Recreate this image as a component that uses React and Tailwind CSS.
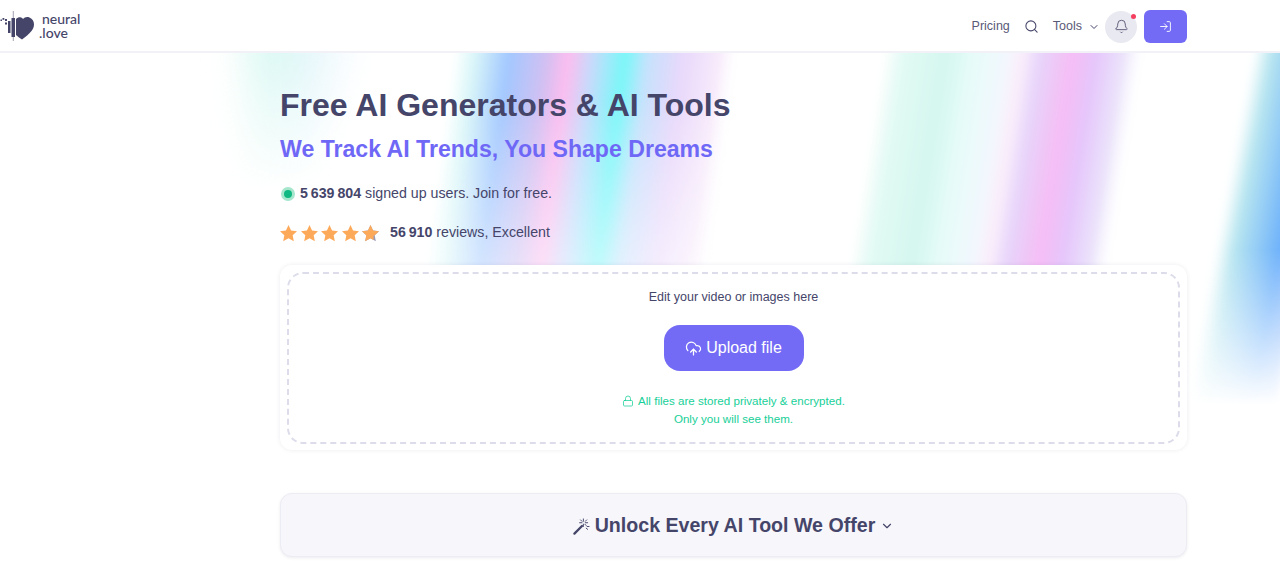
import React from "react";
import { Search, ChevronDown, Bell, LogIn, CloudUpload, Lock } from "lucide-react";

const STAR = "M12 1l3.300 7 7.700 1-5.600 5.300 1.500 7.700L12 18.200 5.100 22l1.500-7.700L1 9l7.700-1z";

function Star({ half }) {
  return (
    <svg width="17" height="17" viewBox="1 1 22 22" className="shrink-0">
      {half ? (
        <>
          <path d={STAR} fill="#9a9ab5" />
          <path d="M12 1l3.300 7 7.700 1-5.600 5.300L16 15v5.500l-4-2.300L5.100 22l1.500-7.700L1 9l7.700-1z" fill="#fda95a" />
        </>
      ) : (
        <path d={STAR} fill="#fda95a" />
      )}
    </svg>
  );
}

function Logo() {
  return (
    <svg width="36" height="36" viewBox="0 0 36 36" className="shrink-0">
      <g fill="#45456a">
        <path d="M16 10c1.500-1.500 3.500-2 5-1.500 1 .3 1.500.8 2 1.500 1.500-1.800 4-2.500 6.500-1.500 3 1.200 4.500 4 4.500 7 0 2.500-1 4.500-2.500 6.500-2.500 3.200-6 6-9.500 8.500-2-1.300-4-2.800-6-4.500z" />
        <rect x="11.500" y="9" width="3.500" height="19" />
        <rect x="8" y="12" width="2.500" height="12" />
        <rect x="5" y="10" width="2" height="2" />
        <rect x="5" y="13.500" width="2" height="2" />
        <rect x="2.500" y="9" width="1.800" height="1.800" />
        <rect x="0.500" y="10.500" width="1.500" height="1.500" />
      </g>
      <rect x="12.800" y="2" width="1" height="30" fill="#45456a" opacity=".5" />
    </svg>
  );
}

function Wand() {
  return (
    <svg width="17" height="17" viewBox="0 0 18 18" fill="none" stroke="#45456a" className="shrink-0">
      <path d="M1.500 16.500l8-8" strokeWidth="2.400" strokeLinecap="round" />
      <path d="M11 1v2.500M11 6.500V9M7 5h2.500M13 5h2.500M8 2l1.500 1.500M14.500 2L13 3.500M14 8l-1.500-1.500M17 9h-2M15.500 12l-1.500-1.200" strokeWidth="1" strokeLinecap="round" />
    </svg>
  );
}

function Aurora() {
  return (
    <svg width="1280" height="576" viewBox="0 0 1280 576" className="absolute top-0 left-0 pointer-events-none">
      <defs>
        <filter id="b4" x="-20%" y="-20%" width="140%" height="140%"><feGaussianBlur stdDeviation="4" /></filter>
        <filter id="b10" x="-30%" y="-30%" width="160%" height="160%"><feGaussianBlur stdDeviation="14" /></filter>
        <linearGradient id="hz" x1="0" x2="1" y1="0" y2="0">
          <stop offset="0" stopColor="#d6f8f1" stopOpacity="0" />
          <stop offset=".3" stopColor="#d6f8f1" />
          <stop offset=".6" stopColor="#e4f6fb" />
          <stop offset="1" stopColor="#f4f8ff" stopOpacity="0" />
        </linearGradient>
        <linearGradient id="cn" x1="0" x2="1" y1="0" y2="0">
          <stop offset="0" stopColor="#d8f7f7" stopOpacity="0" />
          <stop offset=".07" stopColor="#daf6f8" />
          <stop offset=".19" stopColor="#a2c8ff" />
          <stop offset=".32" stopColor="#d0c0f2" />
          <stop offset=".4" stopColor="#fdbdef" />
          <stop offset=".49" stopColor="#c4dcfc" />
          <stop offset=".6" stopColor="#78f8f8" />
          <stop offset=".68" stopColor="#c6e2fd" />
          <stop offset=".8" stopColor="#e8d8fb" />
          <stop offset=".93" stopColor="#f7eafb" />
          <stop offset="1" stopColor="#ffffff" stopOpacity="0" />
        </linearGradient>
        <linearGradient id="r1" x1="0" x2="1" y1="0" y2="0">
          <stop offset="0" stopColor="#dff9f2" stopOpacity="0" />
          <stop offset=".08" stopColor="#e2faf4" />
          <stop offset=".24" stopColor="#d4f7ef" />
          <stop offset=".34" stopColor="#e6fbf8" />
          <stop offset=".46" stopColor="#f1f8fe" />
          <stop offset=".53" stopColor="#fbeefb" />
          <stop offset=".6" stopColor="#e6d4fa" />
          <stop offset=".72" stopColor="#f6bdf5" />
          <stop offset=".81" stopColor="#e5c6fb" />
          <stop offset=".92" stopColor="#ebe4fb" />
          <stop offset="1" stopColor="#ffffff" stopOpacity="0" />
        </linearGradient>
        <linearGradient id="r2" x1="0" x2="1" y1="0" y2="0">
          <stop offset="0" stopColor="#bfeaf0" stopOpacity="0" />
          <stop offset=".2" stopColor="#b8e6f0" />
          <stop offset=".72" stopColor="#6cb0fb" />
          <stop offset="1" stopColor="#90bafc" />
        </linearGradient>
        <linearGradient id="fadeCn" gradientUnits="userSpaceOnUse" x1="0" x2="0" y1="100" y2="420">
          <stop offset="0" stopColor="#fff" />
          <stop offset="1" stopColor="#000" />
        </linearGradient>
        <linearGradient id="fadeHz" gradientUnits="userSpaceOnUse" x1="0" x2="0" y1="40" y2="190">
          <stop offset="0" stopColor="#fff" />
          <stop offset="1" stopColor="#000" />
        </linearGradient>
        <linearGradient id="fadeR2" gradientUnits="userSpaceOnUse" x1="0" x2="0" y1="250" y2="405">
          <stop offset="0" stopColor="#fff" />
          <stop offset="1" stopColor="#000" />
        </linearGradient>
        <mask id="mCn" maskUnits="userSpaceOnUse" x="0" y="0" width="1280" height="576"><rect width="1280" height="576" fill="url(#fadeCn)" /></mask>
        <mask id="mHz" maskUnits="userSpaceOnUse" x="0" y="0" width="1280" height="576"><rect width="1280" height="576" fill="url(#fadeHz)" /></mask>
        <mask id="mR2" maskUnits="userSpaceOnUse" x="0" y="0" width="1280" height="576"><rect width="1280" height="576" fill="url(#fadeR2)" /></mask>
      </defs>
      <g mask="url(#mHz)">
        <polygon points="225,30 370,30 300,200 245,200" fill="url(#hz)" filter="url(#b10)" />
      </g>
      <g mask="url(#mCn)" filter="url(#b4)">
        <rect width="285" height="410" fill="url(#cn)" transform="translate(459,20) skewX(-7.4)" />
      </g>
      <g filter="url(#b4)">
        <rect width="262" height="410" fill="url(#r1)" transform="translate(889,20) skewX(-9.1)" />
      </g>
      <g mask="url(#mR2)" filter="url(#b4)">
        <rect width="90" height="400" fill="url(#r2)" transform="translate(1260,20) skewX(-10.800)" />
      </g>
    </svg>
  );
}

export default function App() {
  return (
    <div className="relative h-[576px] w-[1280px] overflow-hidden bg-white font-['Liberation_Sans',Arial,sans-serif] text-[#45456a]">
      <Aurora />
      <header className="relative z-10 flex h-[53px] items-center justify-between bg-white pr-[93px] border-b-2 border-[#f1f1f7]">
        <div className="flex items-center gap-[6px] pt-[3px]">
          <Logo />
          <div className="font-['Lato',sans-serif] text-[14px] leading-[14px] font-medium -mt-[2px]">
            <div>neural</div>
            <div className="-ml-[3px]">.love</div>
          </div>
        </div>
        <nav className="mt-[2px] flex items-center text-[12.500px] text-[#5a5a78]">
          <span>Pricing</span>
          <Search size={15} strokeWidth={1.7} className="ml-[14px] text-[#45456a]" />
          <span className="ml-[14px]">Tools</span>
          <ChevronDown size={12} className="ml-[6px] text-[#45456a]" />
          <div className="relative ml-[5px] flex h-[32px] w-[32px] items-center justify-center rounded-full bg-[#e9e9f1]">
            <Bell size={15} strokeWidth={1.5} />
            <span className="absolute right-[1px] top-[3px] h-[5px] w-[5px] rounded-full bg-[#f43f5e]" />
          </div>
          <button className="ml-[7px] flex h-[33px] w-[43px] items-center justify-center rounded-md bg-[#736bf5] text-white">
            <LogIn size={13} strokeWidth={1.7} />
          </button>
        </nav>
      </header>

      <main className="relative ml-[280px] w-[907px]">
        <h1 className="mt-[33px] text-[32px] leading-[38px] font-bold">Free AI Generators &amp; AI Tools</h1>
        <h2 className="mt-[9px] text-[23.100px] leading-[32px] font-bold text-[#6f68f6]">We Track AI Trends, You Shape Dreams</h2>

        <div className="mt-[17px] flex h-[24px] items-center text-[14.200px]">
          <span className="ml-[1px] flex h-[14px] w-[14px] items-center justify-center rounded-full bg-[#a5e6cd]">
            <span className="h-[8px] w-[8px] rounded-full bg-[#10b981]" />
          </span>
          <span className="ml-[5px]"><b className="font-bold [word-spacing:-1px]">5 639 804</b> signed up users. Join for free.</span>
        </div>

        <div className="mt-[15px] flex h-[24px] items-center text-[14.200px]">
          <div className="flex gap-[3.500px]">
            <Star /><Star /><Star /><Star /><Star half />
          </div>
          <span className="ml-[11px]"><b className="font-bold [word-spacing:-1px]">56 910</b> reviews, Excellent</span>
        </div>

        <section className="mt-[20px] rounded-xl bg-white px-[7px] pt-[7px] pb-[6px] shadow-[0_0_4px_rgba(69,69,106,0.1)]">
          <div className="flex h-[172px] flex-col items-center rounded-2xl border-2 border-dashed border-[#dcdcea] pt-[14px]">
            <p className="text-[12.500px] leading-[18px]">Edit your video or images here</p>
            <button className="mt-[19px] flex h-[46px] w-[140px] items-center justify-center gap-[4px] rounded-2xl bg-[#736bf5] text-[16px] text-white">
              <CloudUpload size={17} strokeWidth={1.8} />
              Upload file
            </button>
            <p className="mt-[21px] flex items-center gap-[4px] text-[11.600px] leading-[18px] text-[#17cf98]">
              <Lock size={12} strokeWidth={1.5} />
              All files are stored privately &amp; encrypted.
            </p>
            <p className="text-[11.600px] leading-[18px] text-[#17cf98]">Only you will see them.</p>
          </div>
        </section>

        <section className="mt-[43px] flex h-[64px] items-center justify-center gap-[5px] rounded-xl border border-[#ececf4] bg-[#f6f6fb] pt-[2px] shadow-[0_1px_3px_rgba(69,69,106,0.1)]">
          <Wand />
          <span className="text-[19.600px] font-bold">Unlock Every AI Tool We Offer</span>
          <ChevronDown size={14} strokeWidth={2} />
        </section>
      </main>
    </div>
  );
}
